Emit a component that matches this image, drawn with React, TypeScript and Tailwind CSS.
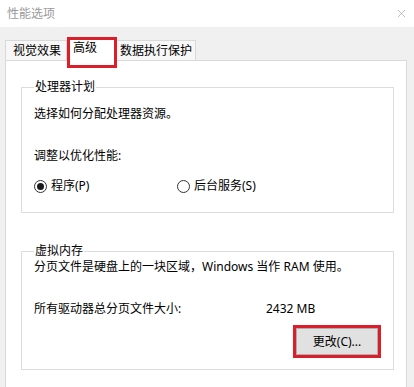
import { X } from "lucide-react";

function Radio({ checked, label }: { checked?: boolean; label: string }) {
  return (
    <label className="flex items-center gap-[4px]">
      <span className="w-[13px] h-[13px] rounded-full border border-[#333333] bg-white flex items-center justify-center">
        {checked && <span className="w-[7px] h-[7px] rounded-full bg-[#1a1a1a]" />}
      </span>
      <span>{label}</span>
    </label>
  );
}

export default function App() {
  return (
    <div
      className="w-[414px] h-[387px] overflow-hidden bg-[#f0f0f0] text-[12px] leading-[16px] text-black"
      style={{ fontFamily: '"Noto Sans", "Noto Sans CJK SC", sans-serif' }}
    >
      {/* Title bar */}
      <div className="h-[27px] bg-white flex items-center justify-between pl-[7px] pr-[6px]">
        <span className="text-[#9a9a9a] text-[12px]">性能选项</span>
        <X className="w-[13px] h-[13px] text-[#8a8a8a]" strokeWidth={1} />
      </div>

      {/* Tabs */}
      <div className="h-[33px] pl-[5px] flex items-end">
        <div className="w-[62px] h-[20px] border border-b-0 border-[#d9d9d9] bg-[#f7f7f7] pl-[7px] flex items-center">
          视觉效果
        </div>
        <div className="relative z-10 -mb-px w-[50px] h-[24px] border border-b-0 border-[#d9d9d9] bg-white pl-[5px] pt-[2px]">
          高级
          <div className="absolute -left-[1px] -top-[1px] w-[50px] h-[31px] border-[3px] border-[#dc1e2a] pointer-events-none" />
        </div>
        <div className="w-[79px] h-[20px] border border-b-0 border-l-0 border-[#d9d9d9] bg-[#f7f7f7] pl-[3px] flex items-center">
          数据执行保护
        </div>
      </div>

      {/* Panel */}
      <div className="ml-[5px] w-[402px] h-[340px] bg-white border border-[#d9d9d9] pl-[15px] pt-[20px]">
        <fieldset className="w-[373px] border border-[#dcdcdc] pl-[12px] pb-[18px]">
          <legend className="px-[1px] leading-[12px]">处理器计划</legend>
          <p className="mt-[13px]">选择如何分配处理器资源。</p>
          <p className="mt-[26px]">调整以优化性能:</p>
          <div className="mt-[14px] flex">
            <div className="w-[143px]">
              <Radio checked label="程序(P)" />
            </div>
            <Radio label="后台服务(S)" />
          </div>
        </fieldset>

        <fieldset className="mt-[32px] w-[373px] border border-[#dcdcdc] pl-[12px] pr-[12px] pb-[11px]">
          <legend className="px-[1px] leading-[12px]">虚拟内存</legend>
          <p className="mt-[2px]">分页文件是硬盘上的一块区域，Windows 当作 RAM 使用。</p>
          <div className="mt-[26px] flex">
            <span className="w-[232px]">所有驱动器总分页文件大小:</span>
            <span>2432 MB</span>
          </div>
          <div className="mt-[8px] flex justify-end">
            <div className="border-[3px] border-[#dc1e2a]">
              <button className="w-[82px] h-[27px] bg-[#e1e1e1] border border-[#adadad] text-[12px]">
                更改(C)...
              </button>
            </div>
          </div>
        </fieldset>
      </div>
    </div>
  );
}
